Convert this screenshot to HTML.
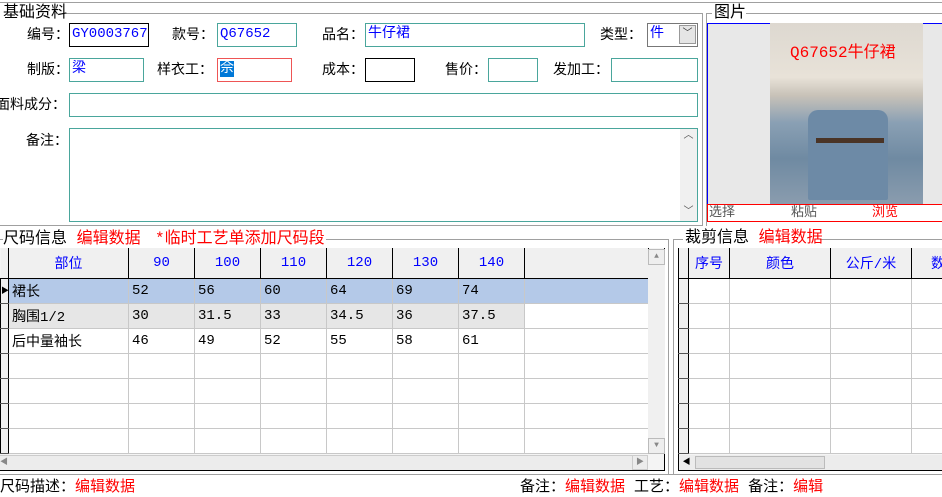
<!DOCTYPE html>
<html><head><meta charset="utf-8"><style>
*{box-sizing:border-box;margin:0;padding:0}
body{width:942px;height:483px;overflow:hidden;background:#fff;font-family:"Liberation Mono","WenQuanYi Zen Hei","Noto Sans CJK SC",monospace;font-size:14px;color:#000;position:relative}
.a{position:absolute;white-space:nowrap}
.l{position:absolute;line-height:16px;white-space:nowrap;margin-top:2px}
.t{font-size:16px;line-height:18px;margin-top:0}
.in{position:absolute;border:1px solid #4aa69c;background:#fff;color:#00f;line-height:20px;padding-left:2px;font-size:14px}
.hl{position:absolute;height:1px;background:#a0a0a0}
.vl{position:absolute;width:1px;background:#a0a0a0}
.red{color:#f00}
table{border-collapse:collapse;position:absolute;table-layout:fixed}
td{border:1px solid #c8c8c8;height:25px;font-size:14px;padding-left:3px;overflow:hidden;white-space:nowrap}
th{border:1px solid #000;border-top:none;background:#f0f0f0;color:#00f;font-weight:normal;height:30px;font-size:14px}
td.rh{background:#f0f0f0;border:1px solid #000;border-top:none;border-bottom:1px solid #555;padding:0}
</style></head><body>
<div class="hl" style="left:0;top:2px;width:942px"></div>
<div class="hl" style="left:66px;top:13px;width:636px"></div>
<div class="vl" style="left:702px;top:13px;height:213px"></div>
<div class="hl" style="left:0;top:225px;width:702px"></div>
<div class="l t" style="left:3px;top:4px">基础资料</div>

<div class="l" style="left:27px;top:26px">编号：</div>
<div class="in" style="left:69px;top:23px;width:80px;height:24px;border-color:#000">GY0003767</div>
<div class="l" style="left:172px;top:26px">款号：</div>
<div class="in" style="left:217px;top:23px;width:80px;height:24px">Q67652</div>
<div class="l" style="left:322px;top:26px">品名：</div>
<div class="in" style="left:365px;top:23px;width:220px;height:24px">牛仔裙</div>
<div class="l" style="left:600px;top:26px">类型：</div>
<div class="in" style="left:647px;top:23px;width:51px;height:24px;border-color:#777">件</div>
<div class="a" style="left:679px;top:25px;width:17px;height:19px;background:#e5e5e5;border:1px solid #999;font-size:10px;text-align:center;line-height:17px;color:#333">﹀</div>

<div class="l" style="left:27px;top:61px">制版：</div>
<div class="in" style="left:69px;top:58px;width:75px;height:24px">梁</div>
<div class="l" style="left:157px;top:61px">样衣工：</div>
<div class="in" style="left:217px;top:58px;width:75px;height:24px;border-color:#e55"><span style="background:#0078d7;color:#fff">佘</span></div>
<div class="l" style="left:322px;top:61px">成本：</div>
<div class="in" style="left:365px;top:58px;width:50px;height:24px;border-color:#000"></div>
<div class="l" style="left:445px;top:61px">售价：</div>
<div class="in" style="left:488px;top:58px;width:50px;height:24px"></div>
<div class="l" style="left:553px;top:61px">发加工：</div>
<div class="in" style="left:611px;top:58px;width:87px;height:24px"></div>

<div class="l" style="left:-4px;top:96px">面料成分：</div>
<div class="in" style="left:69px;top:93px;width:629px;height:24px"></div>
<div class="l" style="left:26px;top:132px">备注：</div>
<div class="in" style="left:69px;top:128px;width:629px;height:94px"></div>
<div class="a" style="left:680px;top:129px;width:17px;height:92px;background:#f0f0f0;color:#555;font-size:10px;text-align:center">
<div style="line-height:16px">︿</div><div style="position:absolute;bottom:0;width:17px;line-height:16px">﹀</div></div>

<div class="hl" style="left:706px;top:13px;width:6px"></div>
<div class="hl" style="left:746px;top:13px;width:196px"></div>
<div class="vl" style="left:706px;top:13px;height:213px"></div>
<div class="l t" style="left:714px;top:4px">图片</div>
<div class="a" style="left:707px;top:23px;width:240px;height:199px;border:1px solid #00f;background:#e8e8e8"></div>
<div class="a" style="left:770px;top:23px;width:153px;height:181px;background:linear-gradient(180deg,#ddd8d0 0%,#e8e2d8 30%,#c8c2b8 40%,#8aa0b4 55%,#6f8aa2 75%,#8a9cae 100%)"></div>
<div class="a" style="left:808px;top:110px;width:80px;height:90px;background:#6d8aa6;border-radius:10px 10px 2px 2px"></div>
<div class="a" style="left:816px;top:138px;width:68px;height:5px;background:#4a3426"></div>
<div class="a red" style="left:790px;top:38px;font-size:16px">Q67652牛仔裙</div>
<div class="a" style="left:707px;top:204px;width:240px;height:18px;border:1px solid #f00;background:#fff;font-size:13px;color:#555;line-height:16px">
<span class="a" style="left:1px">选择</span><span class="a" style="left:83px">粘贴</span><span class="a red" style="left:164px">浏览</span></div>

<div class="hl" style="left:0;top:239px;width:3px"></div>
<div class="hl" style="left:326px;top:239px;width:342px"></div>
<div class="vl" style="left:668px;top:239px;height:235px"></div>
<div class="hl" style="left:0;top:474px;width:942px"></div>
<div class="l t" style="left:3px;top:230px">尺码信息 <span class="red">编辑数据</span></div>
<div class="l t red" style="left:155px;top:230px">*临时工艺单添加尺码段</div>
<div class="a" style="left:0;top:248px;width:665px;height:223px;background:#f4f4f4;border-bottom:1px solid #000;border-right:1px solid #000"></div>
<table style="left:0;top:248px;width:648px">
<colgroup><col style="width:8px"><col style="width:120px"><col style="width:66px"><col style="width:66px"><col style="width:66px"><col style="width:66px"><col style="width:66px"><col style="width:66px"><col style="width:124px"></colgroup>
<tr><th style="border-left:none"></th><th>部位</th><th>90</th><th>100</th><th>110</th><th>120</th><th>130</th><th>140</th><th></th></tr>
<tr style="background:#b4c9e8"><td class="rh" style="font-size:8px">▶</td><td>裙长</td><td>52</td><td>56</td><td>60</td><td>64</td><td>69</td><td>74</td><td style="border-right:1px solid #0078d7"></td></tr>
<tr style="background:#e6e6e6"><td class="rh"></td><td>胸围1/2</td><td>30</td><td>31.5</td><td>33</td><td>34.5</td><td>36</td><td>37.5</td><td style="background:#fff"></td></tr>
<tr style="background:#fff"><td class="rh"></td><td>后中量袖长</td><td>46</td><td>49</td><td>52</td><td>55</td><td>58</td><td>61</td><td></td></tr>
<tr style="background:#fff"><td class="rh"></td><td></td><td></td><td></td><td></td><td></td><td></td><td></td><td></td></tr>
<tr style="background:#fff"><td class="rh"></td><td></td><td></td><td></td><td></td><td></td><td></td><td></td><td></td></tr>
<tr style="background:#fff"><td class="rh"></td><td></td><td></td><td></td><td></td><td></td><td></td><td></td><td></td></tr>
<tr style="background:#fff"><td class="rh"></td><td></td><td></td><td></td><td></td><td></td><td></td><td></td><td></td></tr>
</table>
<div class="a" style="left:648px;top:249px;width:17px;height:205px;background:#f0f0f0"></div>
<div class="a" style="left:648px;top:249px;width:17px;height:16px;border:1px solid #bbb;background:#eee;font-size:8px;color:#888;text-align:center;line-height:14px">▲</div>
<div class="a" style="left:648px;top:438px;width:17px;height:16px;border:1px solid #bbb;background:#eee;font-size:8px;color:#888;text-align:center;line-height:14px">▼</div>
<div class="a" style="left:0;top:455px;width:648px;height:15px;background:#ececec;border-top:1px solid #ccc"></div>
<div class="a" style="left:0;top:455px;width:8px;height:15px;font-size:8px;color:#888;line-height:15px">◀</div>
<div class="a" style="left:632px;top:455px;width:16px;height:15px;border:1px solid #ccc;font-size:8px;color:#888;line-height:13px;text-align:center">▶</div>

<div class="vl" style="left:673px;top:239px;height:235px"></div>
<div class="hl" style="left:673px;top:239px;width:10px"></div>
<div class="hl" style="left:820px;top:239px;width:122px"></div>
<div class="l t" style="left:685px;top:229px">裁剪信息 <span class="red">编辑数据</span></div>
<div class="a" style="left:678px;top:248px;width:270px;height:223px;background:#f4f4f4;border:1px solid #000;border-top:none"></div>
<table style="left:678px;top:248px;width:300px">
<colgroup><col style="width:10px"><col style="width:41px"><col style="width:101px"><col style="width:81px"><col style="width:67px"></colgroup>
<tr><th style="border-left:1px solid #000"></th><th>序号</th><th>颜色</th><th>公斤/米</th><th>数量</th></tr>
<tr style="background:#fff"><td class="rh"></td><td></td><td></td><td></td><td></td></tr>
<tr style="background:#fff"><td class="rh"></td><td></td><td></td><td></td><td></td></tr>
<tr style="background:#fff"><td class="rh"></td><td></td><td></td><td></td><td></td></tr>
<tr style="background:#fff"><td class="rh"></td><td></td><td></td><td></td><td></td></tr>
<tr style="background:#fff"><td class="rh"></td><td></td><td></td><td></td><td></td></tr>
<tr style="background:#fff"><td class="rh"></td><td></td><td></td><td></td><td></td></tr>
<tr style="background:#fff"><td class="rh"></td><td></td><td></td><td></td><td></td></tr>
</table>
<div class="a" style="left:679px;top:455px;width:263px;height:15px;background:#ececec"></div>
<div class="a" style="left:679px;top:455px;width:15px;height:15px;font-size:8px;line-height:15px;text-align:center">◀</div>
<div class="a" style="left:695px;top:456px;width:130px;height:13px;background:#e2e2e2;border:1px solid #bbb"></div>

<div class="a" style="left:0;top:479px;font-size:15px;line-height:18px">尺码描述：<span class="red">编辑数据</span></div>
<div class="a" style="left:520px;top:479px;font-size:15px;line-height:18px">备注：<span class="red">编辑数据</span> 工艺：<span class="red">编辑数据</span> 备注：<span class="red">编辑</span></div>
</body></html>
